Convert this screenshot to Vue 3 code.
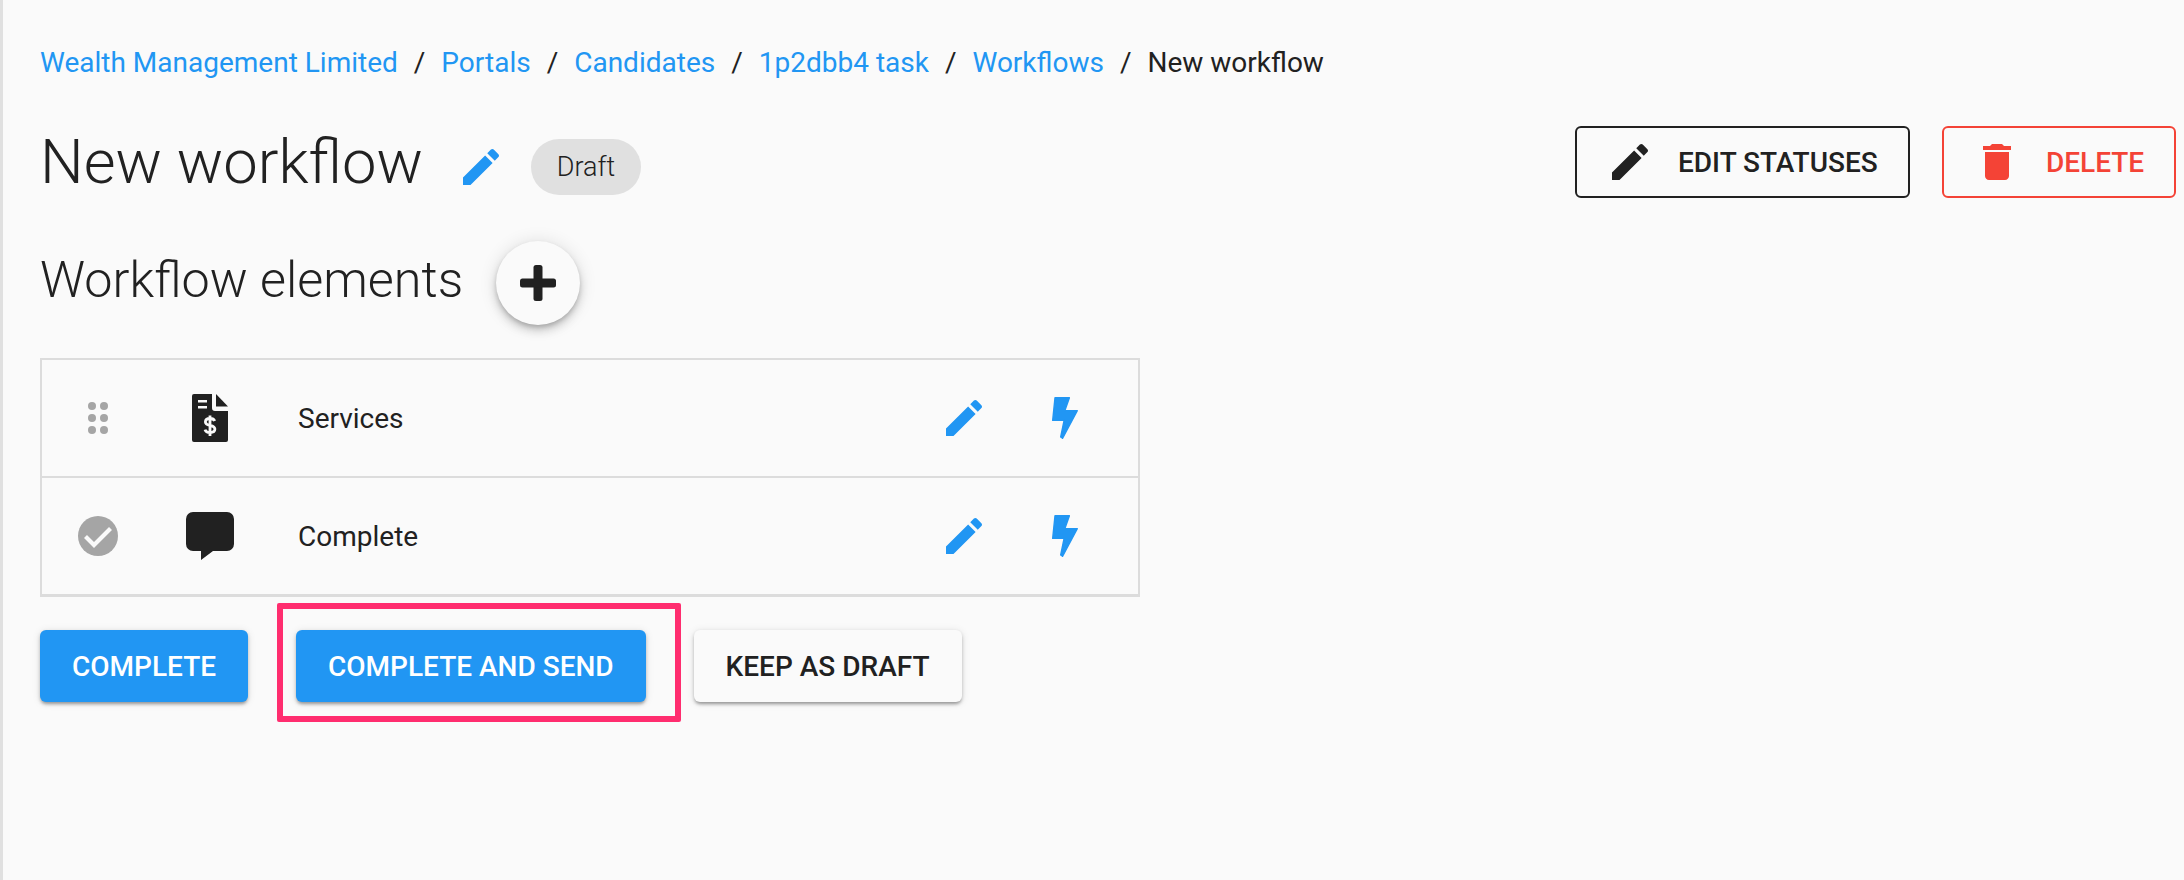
<template>
  <div class="page">
    <nav class="crumbs">
      <template v-for="(crumb, i) in crumbs" :key="crumb">
        <a class="crumb-link">{{ crumb }}</a>
        <span class="crumb-sep">/</span>
      </template>
      <span class="crumb-current">New workflow</span>
    </nav>

    <div class="header">
      <div class="title-wrap">
        <h1 class="title">New workflow</h1>
        <svg class="icon edit-title" viewBox="0 0 24 24"><path :d="pencil" /></svg>
        <span class="chip">Draft</span>
      </div>
      <div class="header-actions">
        <button class="outline-btn dark">
          <svg class="icon" viewBox="0 0 24 24"><path :d="pencil" /></svg>
          <span>Edit statuses</span>
        </button>
        <button class="outline-btn danger">
          <svg class="icon" viewBox="0 0 24 24"><path d="M6 19c0 1.1.9 2 2 2h8c1.1 0 2-.9 2-2V7H6v12zM19 4h-3.5l-1-1h-5l-1 1H5v2h14V4z" /></svg>
          <span>Delete</span>
        </button>
      </div>
    </div>

    <div class="section-head">
      <h2 class="section-title">Workflow elements</h2>
      <button class="fab">
        <svg viewBox="0 0 36 36" class="plus">
          <rect x="13.5" y="0" width="9" height="36" rx="2.5" />
          <rect x="0" y="13.5" width="36" height="9" rx="2.5" />
        </svg>
      </button>
    </div>

    <div class="list">
      <div v-for="row in rows" :key="row.name" class="row">
        <div class="row-lead">
          <svg v-if="row.name === 'Services'" class="drag" viewBox="0 0 20 32">
            <circle v-for="d in dots" :key="d[0] + '-' + d[1]" :cx="d[0]" :cy="d[1]" r="4" />
          </svg>
          <svg v-else class="done" viewBox="0 0 40 40">
            <circle cx="20" cy="20" r="20" fill="#a5a5a5" />
            <path d="M7.5 20.5 16 29 32.5 12.5" fill="none" stroke="#fafafa" stroke-width="4.2" />
          </svg>
        </div>
        <div class="row-type">
          <svg v-if="row.name === 'Services'" class="doc" viewBox="0 0 36 48">
            <path d="M2 0h18v14a3 3 0 0 0 3 3h13v29a2 2 0 0 1-2 2H2a2 2 0 0 1-2-2V2a2 2 0 0 1 2-2z" />
            <path d="M24 0l12 12.5H24z" />
            <path d="M6 6h9v2.500H6zM6 12h9v2.500H6z" fill="#fafafa" />
            <path d="M22.700 27c-.6-1.600-2.300-2.500-4.700-2.500-2.800 0-4.600 1.300-4.600 3.400 0 4.700 9.500 2.300 9.500 7.200 0 2.200-2 3.500-4.900 3.500-2.600 0-4.400-1.100-5-3M18 21.500v20.500" fill="none" stroke="#fafafa" stroke-width="2.800" />
          </svg>
          <svg v-else class="chat" viewBox="0 0 48 48">
            <path d="M7 0h34a7 7 0 0 1 7 7v25a7 7 0 0 1-7 7H27L15 48V39H7a7 7 0 0 1-7-7V7a7 7 0 0 1 7-7z" />
          </svg>
        </div>
        <div class="row-name">{{ row.name }}</div>
        <svg class="icon row-edit" viewBox="0 0 24 24"><path :d="pencil" /></svg>
        <svg class="bolt" viewBox="0 0 26 42">
          <path d="M3 .7h14.400l-4.600 13h12.500L10.500 41.300l-1.800-1.300 3.400-16.600H.7z" />
        </svg>
      </div>
    </div>

    <div class="actions">
      <button class="btn primary">Complete</button>
      <div class="send-wrap">
        <button class="btn primary">Complete and send</button>
        <div class="highlight"></div>
      </div>
      <button class="btn plain">Keep as draft</button>
    </div>
  </div>
</template>

<script setup>
const crumbs = ['Wealth Management Limited', 'Portals', 'Candidates', '1p2dbb4 task', 'Workflows']
const rows = [{ name: 'Services' }, { name: 'Complete' }]
const dots = [[4, 4], [16, 4], [4, 16], [16, 16], [4, 28], [16, 28]]
const pencil = 'M3 17.25V21h3.75L17.81 9.94l-3.75-3.75L3 17.25zM20.71 7.04c.39-.39.39-1.02 0-1.41l-2.34-2.34c-.39-.39-1.02-.39-1.41 0l-1.83 1.83 3.75 3.75 1.83-1.83z'
</script>

<style>
html, body {
  margin: 0;
  background: #fafafa;
}
</style>

<style scoped>
.page {
  box-sizing: border-box;
  height: 880px;
  padding: 45px 8px 0 37px;
  border-left: 3px solid #e0e0e0;
  background: #fafafa;
  color: #212121;
  font-family: Roboto, "Liberation Sans", sans-serif;
  overflow: hidden;
}

.crumbs {
  display: flex;
  align-items: center;
  height: 36px;
  font-size: 28px;
  line-height: 36px;
}

.crumb-link {
  color: #2196f3;
}

.crumb-sep {
  margin: 0 16px;
}

.header {
  display: flex;
  justify-content: space-between;
  align-items: flex-start;
  margin-top: 45px;
}

.title-wrap {
  display: flex;
  align-items: center;
  height: 72px;
}

.title {
  margin: 0;
  font-size: 61.5px;
  font-weight: 300;
  line-height: 72px;
}

.icon {
  display: block;
  flex: none;
  width: 48px;
  height: 48px;
  fill: currentColor;
}

.edit-title {
  margin: 10px 0 0 34px;
  color: #2196f3;
}

.chip {
  box-sizing: border-box;
  width: 110px;
  height: 56px;
  margin: 10px 0 0 26px;
  border-radius: 28px;
  background: #e0e0e0;
  font-size: 27px;
  font-weight: 300;
  line-height: 56px;
  text-align: center;
}

.header-actions {
  display: flex;
  gap: 32px;
}

.outline-btn {
  display: flex;
  align-items: center;
  box-sizing: border-box;
  height: 72px;
  padding: 0 0 0 29px;
  border: 2px solid currentColor;
  border-radius: 6px;
  background: none;
  font: 500 28px Roboto, sans-serif;
  text-transform: uppercase;
}

.outline-btn .icon {
  margin-right: 24px;
}

.dark {
  width: 335px;
  color: #212121;
}

.danger {
  width: 234px;
  color: #f44336;
}

.danger .icon {
  margin-right: 25px;
}

.section-head {
  display: flex;
  align-items: center;
  margin-top: 43px;
}

.section-title {
  margin: 0 0 6px;
  font-size: 50.3px;
  font-weight: 300;
  line-height: 78px;
}

.fab {
  display: flex;
  align-items: center;
  justify-content: center;
  width: 84px;
  height: 84px;
  margin-left: 33px;
  padding: 0;
  border: none;
  border-radius: 50%;
  background: #fafafa;
  box-shadow: 0 3px 5px -1px rgba(0, 0, 0, .2), 0 6px 10px 0 rgba(0, 0, 0, .14), 0 1px 18px 0 rgba(0, 0, 0, .12);
}

.plus {
  width: 36px;
  height: 36px;
  fill: #212121;
}

.list {
  box-sizing: border-box;
  width: 1100px;
  margin-top: 33px;
  border: 2px solid #dcdcdc;
  border-bottom-width: 3px;
}

.row {
  display: flex;
  align-items: center;
  height: 116px;
  color: #212121;
}

.row + .row {
  border-top: 2px solid #dcdcdc;
}

.row-lead {
  display: flex;
  justify-content: center;
  width: 111px;
  flex: none;
}

.drag {
  width: 20px;
  height: 32px;
  fill: #a5a5a5;
}

.done {
  width: 40px;
  height: 40px;
}

.row-type {
  display: flex;
  justify-content: center;
  width: 114px;
  flex: none;
}

.doc {
  width: 36px;
  height: 48px;
  fill: #212121;
}

.chat {
  width: 48px;
  height: 48px;
  fill: #212121;
}

.row-name {
  flex: 1;
  margin-left: 31px;
  font-size: 28px;
}

.row-edit {
  color: #2196f3;
}

.bolt {
  width: 26px;
  height: 42px;
  margin: 0 60px 0 64px;
  fill: #2196f3;
  stroke: #2196f3;
  stroke-width: 1.4;
  stroke-linejoin: round;
}

.actions {
  display: flex;
  align-items: flex-start;
  margin-top: 33px;
}

.send-wrap {
  position: relative;
  margin: 0 48px;
}

.highlight {
  position: absolute;
  top: -27px;
  left: -19px;
  right: -35px;
  bottom: -20px;
  border: 6px solid #ff2d6f;
  border-radius: 2px;
  pointer-events: none;
}

.btn {
  display: block;
  height: 72px;
  padding: 0 32px;
  border: none;
  border-radius: 6px;
  font: 500 28px Roboto, sans-serif;
  text-transform: uppercase;
  box-shadow: 0 3px 3px -1px rgba(0, 0, 0, .25), 0 2px 4px 0 rgba(0, 0, 0, .14), 0 1px 8px 0 rgba(0, 0, 0, .1);
}

.primary {
  background: #2196f3;
  color: #fff;
}

.plain {
  padding-right: 33px;
  background: #fafafa;
  color: #212121;
}
</style>
